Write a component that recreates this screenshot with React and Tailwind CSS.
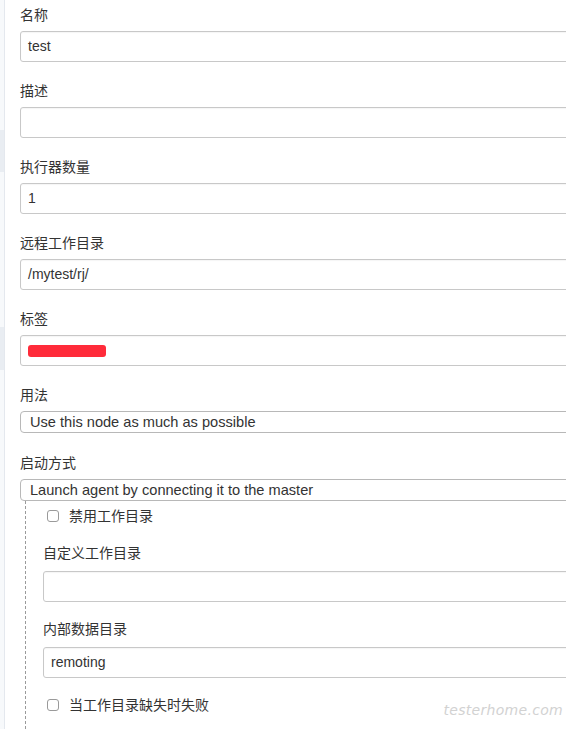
import React from "react";

const font = { fontFamily: '"Liberation Sans", "Noto Sans CJK SC", sans-serif' };

function Label({ children, className = "" }) {
  return <div className={"h-5 leading-5 text-[14px] text-[#333] " + className}>{children}</div>;
}

function TextInput({ value, children }) {
  return (
    <div className="h-[31px] w-[600px] rounded-[3px] border border-[#c8c8c8] bg-white pl-[7px] text-[14px] leading-[29px] text-[#333] shadow-[inset_0_1px_1px_rgba(0,0,0,0.04)]">
      {value}
      {children}
    </div>
  );
}

function SelectBox({ value }) {
  return (
    <div className="h-[22px] w-[600px] rounded-[4px] border border-[#b8b8b8] bg-white pl-[9px] text-[14.6px] leading-[20px] text-[#333]">
      {value}
    </div>
  );
}

function Checkbox({ label }) {
  return (
    <div className="flex h-5 items-center">
      <div className="ml-[4px] h-[12px] w-[12px] rounded-[3px] border border-[#9a9a9a] bg-white" />
      <span className="ml-[10px] text-[14px] text-[#333]">{label}</span>
    </div>
  );
}

export default function App() {
  return (
    <div className="relative h-[729px] w-[566px] overflow-hidden bg-white" style={font}>
      <div className="flex h-full">
        <div className="flex w-[5px] shrink-0 flex-col border-r border-[#e4e8ee] bg-[#f7f9fb]">
          <div className="h-[130px]" />
          <div className="h-[42px] bg-[#e9edf2]" />
          <div className="h-[155px]" />
          <div className="h-[43px] bg-[#e9edf2]" />
        </div>
        <div className="flex flex-col pl-[15px] pt-[5px]">
          <Label>名称</Label>
          <div className="mt-[6px]">
            <TextInput value="test" />
          </div>
          <Label className="mt-[19px]">描述</Label>
          <div className="mt-[6px]">
            <TextInput value="" />
          </div>
          <Label className="mt-[19px]">执行器数量</Label>
          <div className="mt-[6px]">
            <TextInput value="1" />
          </div>
          <Label className="mt-[19px]">远程工作目录</Label>
          <div className="mt-[6px]">
            <TextInput value="/mytest/rj/" />
          </div>
          <Label className="mt-[19px]">标签</Label>
          <div className="mt-[6px]">
            <TextInput>
              <div className="mt-[9px] h-[12px] w-[78px] rounded-[3px] bg-[#ff2b3a]" />
            </TextInput>
          </div>
          <Label className="mt-[19px]">用法</Label>
          <div className="mt-[6px]">
            <SelectBox value="Use this node as much as possible" />
          </div>
          <Label className="mt-[20px]">启动方式</Label>
          <div className="mt-[6px]">
            <SelectBox value="Launch agent by connecting it to the master" />
          </div>
          <div className="ml-[5px] flex flex-1 flex-col border-l border-dashed border-[#9a9a9a] pl-[17px] pt-[5px]">
            <Checkbox label="禁用工作目录" />
            <Label className="mt-[17px]">自定义工作目录</Label>
            <div className="mt-[8px]">
              <TextInput value="" />
            </div>
            <Label className="mt-[17px]">内部数据目录</Label>
            <div className="mt-[8px]">
              <TextInput value="remoting" />
            </div>
            <div className="mt-[17px]">
              <Checkbox label="当工作目录缺失时失败" />
            </div>
          </div>
        </div>
      </div>
      <div
        className="absolute right-[3px] top-[700px] text-[14px] italic text-[#d2d2d2]"
        style={{ fontFamily: '"DejaVu Sans", sans-serif', fontWeight: 200, letterSpacing: "0.3px" }}
      >
        testerhome.com
      </div>
    </div>
  );
}
